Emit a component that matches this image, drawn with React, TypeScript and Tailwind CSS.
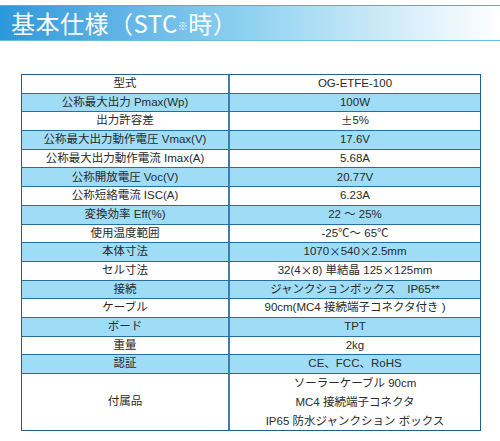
import React from "react";

const rows: [string, string, boolean][] = [
  ["型式", "OG-ETFE-100", false],
  ["公称最大出力 Pmax(Wp)", "100W", true],
  ["出力許容差", "±5%", false],
  ["公称最大出力動作電圧 Vmax(V)", "17.6V", true],
  ["公称最大出力動作電流 Imax(A)", "5.68A", false],
  ["公称開放電圧 Voc(V)", "20.77V", true],
  ["公称短絡電流 ISC(A)", "6.23A", false],
  ["変換効率 Eff(%)", "22 ～ 25%", true],
  ["使用温度範囲", "-25℃～ 65℃", false],
  ["本体寸法", "1070×540×2.5mm", true],
  ["セル寸法", "32(4×8) 単結晶 125×125mm", false],
  ["接続", "ジャンクションボックス　IP65**", true],
  ["ケーブル", "90cm(MC4 接続端子コネクタ付き )", false],
  ["ボード", "TPT", true],
  ["重量", "2kg", false],
  ["認証", "CE、FCC、RoHS", true],
];

const cjk = { fontFamily: '"Noto Sans CJK JP", sans-serif' };

function T({ s }: { s: string }) {
  const parts = s.split(/([±×])/);
  return (
    <>
      {parts.map((p, i) =>
        p === "±" || p === "×" ? (
          <span key={i} style={cjk}>
            {p}
          </span>
        ) : (
          <React.Fragment key={i}>{p}</React.Fragment>
        )
      )}
    </>
  );
}

export default function App() {
  return (
    <div
      className="w-[500px] h-[441px] bg-white overflow-hidden relative"
      style={{ fontFamily: '"Liberation Sans", "Noto Sans CJK JP", sans-serif' }}
    >
      <div className="h-[5px]" />
      <div className="h-[36px] border-t border-b border-t-[#5aaedc] border-b-[#6cc0d8] bg-gradient-to-r from-[#2b97da] via-[#8fd2f0] to-[#ffffff] flex items-center pl-[11px]">
        <span className="text-white text-[24px] leading-none tracking-[0.5px] font-normal" style={cjk}>
          基本仕様（STC<span className="text-[10px] align-middle">※</span>時）
        </span>
      </div>
      <div className="ml-[21px] mt-[33px] w-[460px] border-[1.5px] border-[#1f5f92] text-[11.5px] text-[#2a2a2a]">
        {rows.map(([k, v, blue], i) => (
          <div
            key={i}
            className={`flex h-[18.7px] border-b border-[#2a6d9e] ${blue ? "bg-[#9fdcf5]" : "bg-white"}`}
          >
            <div className="w-[208px] border-r-2 border-[#3f7ea8] flex items-center justify-center leading-none">
              {k}
            </div>
            <div className="flex-1 flex items-center justify-center leading-none">
              <T s={v} />
            </div>
          </div>
        ))}
        <div className="flex h-[56px] bg-white">
          <div className="w-[208px] border-r-2 border-[#3f7ea8] flex items-center justify-center">付属品</div>
          <div className="flex-1 flex flex-col items-center justify-center leading-[19px]">
            <div>ソーラーケーブル 90cm</div>
            <div>MC4 接続端子コネクタ</div>
            <div>IP65 防水ジャンクション ボックス</div>
          </div>
        </div>
      </div>
    </div>
  );
}
